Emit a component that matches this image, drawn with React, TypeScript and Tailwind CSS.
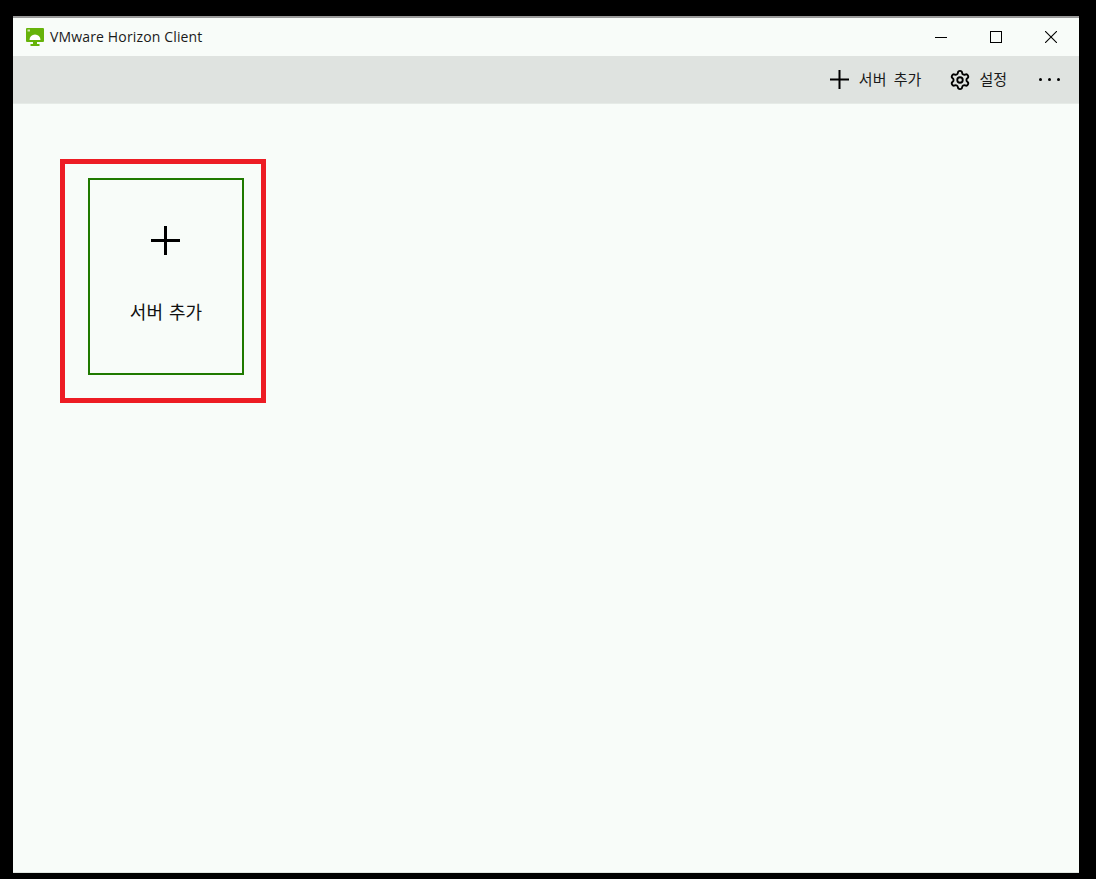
import type { JSX } from "react";
import { Settings } from "lucide-react";

const FONT = "[font-family:'Noto_Sans_CJK_KR','Noto_Sans',sans-serif]";

function HorizonLogo(): JSX.Element {
  return (
    <svg width="18" height="19" viewBox="0 0 18 19" className="shrink-0">
      <rect x="0" y="0" width="18" height="14" rx="1" fill="#66b30a" />
      <path d="M7 14h4v2h2.5v2h-9v-2H7z" fill="#66b30a" />
      <path d="M3.5 12a5.5 5.5 0 0 1 11 0z" fill="#fff" />
      <rect x="1.5" y="1.5" width="2.5" height="2" fill="#cfe8a8" />
    </svg>
  );
}

function PlusIcon({ size, stroke }: { size: number; stroke: number }): JSX.Element {
  return (
    <svg width={size} height={size} viewBox={`0 0 ${size} ${size}`} className="shrink-0">
      <path
        d={`M0 ${size / 2}H${size}M${size / 2} 0V${size}`}
        stroke="#000"
        strokeWidth={stroke}
        fill="none"
      />
    </svg>
  );
}

export default function App(): JSX.Element {
  return (
    <div className={`flex h-[879px] w-[1096px] flex-col bg-black pb-[6px] pl-[13px] pr-[17px] pt-4 ${FONT}`}>
      <div className="flex min-h-0 flex-1 flex-col border-t-2 border-b border-[#9a9a9a] border-b-[#dfe5e0] bg-[#f8fcf9]">
        <header className="flex h-[38px] items-center pl-[13px]">
          <HorizonLogo />
          <span className="ml-[6px] font-['Open_Sans'] text-[14px] leading-none tracking-[0.15px] text-[#1a1a1a]">
            VMware Horizon Client
          </span>
          <div className="ml-auto flex h-full items-center pr-[22px]">
            <svg width="12" height="12" viewBox="0 0 12 12">
              <path d="M0 6.5H12" stroke="#000" strokeWidth="1" />
            </svg>
            <svg width="12" height="12" viewBox="0 0 12 12" className="ml-[43px]">
              <rect x="0.5" y="0.5" width="11" height="11" stroke="#000" fill="none" />
            </svg>
            <svg width="12" height="12" viewBox="0 0 12 12" className="ml-[43px]">
              <path d="M0 0L12 12M12 0L0 12" stroke="#000" strokeWidth="1.1" />
            </svg>
          </div>
        </header>

        <nav className="flex h-[48px] items-center justify-end border-b border-[#e6ebe7] bg-[#dfe3e0] pr-[19px] text-[15px] text-[#1a1a1a]">
          <button type="button" className="flex items-center">
            <PlusIcon size={19} stroke={2} />
            <span className="mb-[3px] ml-[10px] leading-none [word-spacing:4px]">서버 추가</span>
          </button>
          <button type="button" className="ml-[28px] flex items-center">
            <Settings size={22} strokeWidth={2} className="text-black" />
            <span className="mb-[3px] ml-[8px] leading-none">설정</span>
          </button>
          <div className="ml-[32px] flex items-center gap-[6px]">
            <span className="h-[3px] w-[3px] rounded-full bg-black" />
            <span className="h-[3px] w-[3px] rounded-full bg-black" />
            <span className="h-[3px] w-[3px] rounded-full bg-black" />
          </div>
        </nav>

        <main className="flex-1 pl-[47px] pt-[55px]">
          <div className="flex h-[244px] w-[206px] border-[5px] border-[#ed1c24] pl-[23px] pt-[14px]">
            <button
              type="button"
              className="flex h-[197px] w-[156px] flex-col items-center border-2 border-[#1f7a00] pt-[46px]"
            >
              <span className="mr-[2px] flex">
                <PlusIcon size={29} stroke={3} />
              </span>
              <span className="mt-[47px] text-[18px] leading-none text-[#111] [word-spacing:2px]">서버 추가</span>
            </button>
          </div>
        </main>
      </div>
    </div>
  );
}
